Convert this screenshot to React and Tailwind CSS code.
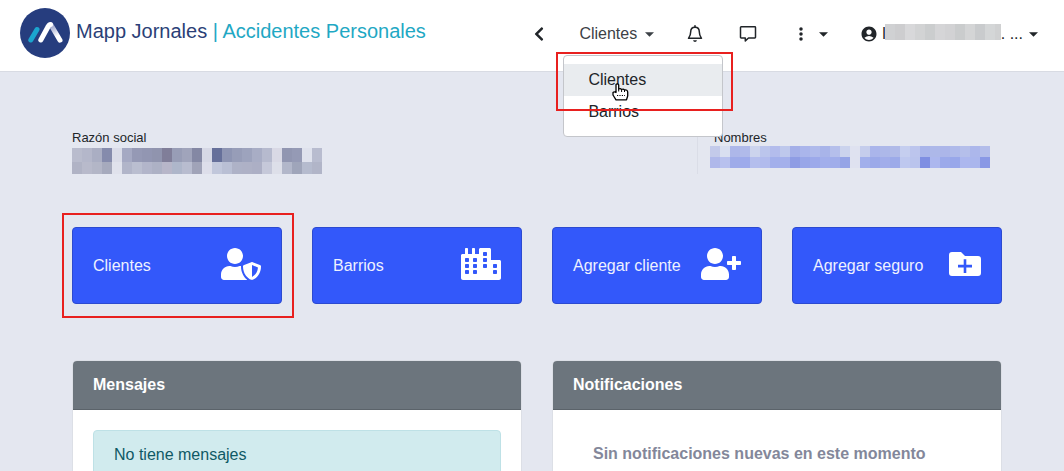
import React from 'react';
import { FaChevronLeft, FaCity, FaUserPlus, FaUserShield } from 'react-icons/fa';
import { FaEllipsisVertical } from 'react-icons/fa6';
import { MdAccountCircle } from 'react-icons/md';

const businessMask = {
  rows: [
    { y: 0, height: 14, colors: ['#b9bccd', '#b4b7ca', '#aaaec3', '#858bac', '#dadce8', '#a5a9c3', '#9599b5', '#9296b2', '#9094ae', '#807e99', '#989db6', '#a0a4bb', '#8488a4', '#d6d8e5', '#66709a', '#8e95b3', '#979db8', '#9da3bd', '#a8adc5', '#b6bace', '#d9d9e5', '#9196b1', '#959ab5', '#dfe2ed', '#b8bccf'] },
    { y: 14, height: 12, colors: ['#b0b3c5', '#b8bacb', '#b3b6c7', '#a6aabd', '#e0e2ec', '#b1b5c9', '#babed0', '#b2b5ca', '#adb1c5', '#b7b6c9', '#aeb6ca', '#b8bccf', '#a0a3b8', '#dddeea', '#c1c7db', '#b9bfd4', '#aeb2c7', '#aeb1c6', '#acafc5', '#c5c8d9', '#dddfe9', '#b2b7ca', '#9fa5ba', '#b5bbce', '#b1b5c8'] },
  ],
  width: 250,
  height: 26,
};

const nameMask = {
  rows: [
    { y: 0, height: 11, colors: ['#c3caea', '#d9dff0', '#adb7e9', '#b0baea', '#ccd4ed', '#bbc5ec', '#b3bcec', '#bec8ec', '#a4afe8', '#aab5eb', '#afbaeb', '#a8b4e9', '#b5bfeb', '#cbd3ed', '#dfe2f0', '#c5cdec', '#aab5eb', '#adb8e9', '#b0bae8', '#c5ceef', '#bcc5ed', '#a9b5ea', '#adb8e9', '#acb6e9', '#afbaea', '#b5bfea', '#acb7eb', '#b3bdea'] },
    { y: 11, height: 11, colors: ['#afb8ea', '#b8c1ee', '#9eabe9', '#9daaeb', '#b4beed', '#b1bbed', '#a2afeb', '#a4b0eb', '#8e9ce4', '#98a6e8', '#9ca9ea', '#a1aeeb', '#a0adea', '#95a4e6', '#dfe2f0', '#a1afeb', '#9ba9e9', '#a1adea', '#9caae9', '#bec8ef', '#bac4ed', '#7e8ee2', '#acb7ee', '#9ba9ea', '#98a7ea', '#acb7ee', '#aab6ed', '#8998e5'] },
  ],
  width: 280,
  height: 22,
};

const userMask = {
  rows: [
    { y: 0, height: 16, colors: ['#d0d1d3', '#cdcdcf', '#d8d8da', '#d2d3d4', '#cbcdce', '#d5d5d7', '#d2d2d4', '#cacccd', '#d4d5d6', '#c9cbcd', '#d4d6d7', '#d0d1d2'] },
  ],
  width: 116,
  height: 16,
};

const Mask = ({ mask, className }) => (
  <svg
    viewBox={`0 0 ${mask.width} ${mask.height}`}
    width={mask.width}
    height={mask.height}
    className={className}
    shapeRendering="crispEdges"
    aria-hidden="true"
  >
    {mask.rows.map((row) =>
      row.colors.map((color, i) => (
        <rect key={`${row.y}-${i}`} x={i * 10} y={row.y} width="10" height={row.height} fill={color} />
      ))
    )}
  </svg>
);

const Logo = () => (
  <svg viewBox="0 0 50 50" className="w-[50px] h-[50px] shrink-0" aria-hidden="true">
    <defs>
      <linearGradient id="leg" gradientUnits="userSpaceOnUse" x1="31" y1="17" x2="40" y2="33">
        <stop offset="0.1" stopColor="#a3abcf" />
        <stop offset="0.7" stopColor="#ffffff" />
      </linearGradient>
    </defs>
    <circle cx="25" cy="25" r="25" fill="#263d7e" />
    <path d="M17 21.500 L10.800 32" stroke="#1ba5cf" strokeWidth="5" strokeLinecap="round" />
    <path d="M31 17 L40 32.200" stroke="url(#leg)" strokeWidth="5" strokeLinecap="round" />
    <path d="M20.800 32 L28 18.800 Q29 16.500 30.500 16.500" fill="none" stroke="#ffffff" strokeWidth="5" strokeLinecap="round" />
  </svg>
);

const Caret = () => (
  <svg viewBox="0 0 10 5" className="w-[9px] h-[5px]" aria-hidden="true">
    <path d="M0 0 H10 L5 5 Z" fill="currentColor" />
  </svg>
);

const BellIcon = () => (
  <svg viewBox="0 0 16 18" className="w-4 h-[18px]" fill="none" stroke="currentColor" aria-hidden="true">
    <path
      d="M8 2.200 C5 2.200 3.700 4.400 3.700 6.800 C3.700 10.200 2.800 11.300 1.500 13.300 H14.500 C13.200 11.300 12.300 10.200 12.300 6.800 C12.300 4.400 11 2.200 8 2.200 Z"
      strokeWidth="1.500"
      strokeLinejoin="round"
    />
    <path d="M8 0.800 V2" strokeWidth="1.600" strokeLinecap="round" />
    <path d="M6 15.300 H10 Q9.600 17 8 17 Q6.400 17 6 15.300 Z" fill="currentColor" stroke="none" />
  </svg>
);

const MessageIcon = () => (
  <svg viewBox="0 0 18 18" className="w-[18px] h-[18px]" fill="none" stroke="currentColor" aria-hidden="true">
    <path
      d="M2.200 1.800 H15.800 Q16.500 1.800 16.500 2.500 V12.300 Q16.500 13 15.800 13 H9.500 L6.300 15.900 V13 H2.200 Q1.500 13 1.500 12.300 V2.500 Q1.500 1.800 2.200 1.800 Z"
      strokeWidth="1.500"
      strokeLinejoin="round"
    />
  </svg>
);

const FolderPlusIcon = () => (
  <svg viewBox="0 0 32 24" className="w-8 h-6" aria-hidden="true">
    <path d="M3 0 H12 L16 4 H29 Q32 4 32 7 V21 Q32 24 29 24 H3 Q0 24 0 21 V3 Q0 0 3 0 Z" fill="currentColor" />
    <path d="M16 7.200 V21 M9 14.100 H23" stroke="#3358fa" strokeWidth="2.600" />
  </svg>
);

const HandCursor = () => (
  <svg viewBox="0 0 17 18" className="absolute left-[48px] top-[27px] w-[17px] h-[18px] pointer-events-none" aria-hidden="true">
    <path
      d="M4 1.500 Q5.500 0.200 6.700 1.800 V6 Q8.500 5 9.500 6.500 Q11.500 5.500 12.500 7 Q15.500 6.500 15.700 9 V13 L14.500 16.800 H4 L1 12 V9.500 Q2.200 8.300 4 9.500 Z"
      fill="#ffffff"
      stroke="#000000"
      strokeWidth="1.300"
      strokeLinejoin="round"
    />
    <path d="M6.700 6 V8.500 M9.600 6.500 V9 M12.500 7 V9" stroke="#000000" strokeWidth="1" />
    <path d="M5 12.500 H13" stroke="#000000" strokeWidth="1.200" strokeDasharray="1.200 1.200" />
  </svg>
);

const shortcuts = [
  { label: 'Clientes', icon: <FaUserShield className="w-10 h-8" />, highlighted: true },
  { label: 'Barrios', icon: <FaCity className="w-10 h-8" /> },
  { label: 'Agregar cliente', icon: <FaUserPlus className="w-10 h-8" /> },
  { label: 'Agregar seguro', icon: <FolderPlusIcon /> },
];

const Header = () => (
  <header className="flex items-start justify-between bg-white border-b border-[#d8dbe3] h-[72px] pl-5 pr-[26px]">
    <a href="#inicio" className="flex items-center gap-[6px] pt-2 text-xl text-[#2b3f77]">
      <Logo />
      <span className="pb-1 whitespace-nowrap">
        Mapp Jornales <span className="text-[#1fa8c4]">| Accidentes Personales</span>
      </span>
    </a>

    <nav className="flex items-center h-6 mt-[22px] text-[#212529]">
      <button aria-label="Volver" className="mr-8">
        <FaChevronLeft className="w-4 h-4" />
      </button>
      <div className="relative mr-[33px]">
        <button className="flex items-center gap-2 text-[#3c4146]" aria-expanded="true">
          Clientes <Caret />
        </button>
        <div className="absolute z-10 -left-4 top-[33px] w-40 py-2 bg-white border border-[#c4c6cb] rounded">
          <a href="#clientes" className="block px-6 py-1 bg-[#e9ecef]">Clientes</a>
          <a href="#barrios" className="block px-6 py-1">Barrios</a>
          <HandCursor />
        </div>
        <div className="absolute z-20 -left-[23px] top-[30px] w-[177px] h-[59px] border-2 border-[#e8201f] pointer-events-none" />
      </div>
      <button aria-label="Notificaciones" className="mr-9">
        <BellIcon />
      </button>
      <button aria-label="Mensajes" className="mr-9">
        <MessageIcon />
      </button>
      <button aria-label="Más opciones" className="flex items-center gap-[10px] mr-8">
        <FaEllipsisVertical className="w-4 h-4" />
        <Caret />
      </button>
      <button aria-label="Cuenta" className="flex items-center">
        <MdAccountCircle className="w-[18px] h-[18px] mr-1" />
        <span className="flex items-center">
          <span>l</span>
          <Mask mask={userMask} className="-ml-px mb-1" />
          <span>. ...</span>
        </span>
        <span className="ml-[6px]"><Caret /></span>
      </button>
    </nav>
  </header>
);

const Panel = ({ title, children }) => (
  <section className="bg-white border border-[#dcdfe6] rounded-[5px] overflow-hidden min-h-[180px]">
    <h2 className="px-5 py-3 font-bold text-white bg-[#6c757d] border-b border-[#5b636a]">{title}</h2>
    <div className="p-5">{children}</div>
  </section>
);

const App = () => {
  return (
    <div className="h-screen overflow-hidden bg-[#e4e7f0] font-['Liberation_Sans',Arial,sans-serif] text-base text-[#212529]">
      <Header />

      <main className="pl-[72px] pr-[62px]">
        <div className="flex justify-between pt-14 text-[13px] leading-5">
          <div>
            <p>Razón social</p>
            <Mask mask={businessMask} />
          </div>
          <div className="mr-3 border-l border-[#dadde7] pl-3">
            <p className="pl-1">Nombres</p>
            <Mask mask={nameMask} className="-mt-[2px]" />
          </div>
        </div>

        <div className="grid grid-cols-4 gap-[30px] mt-[53px]">
          {shortcuts.map((item) => (
            <div key={item.label} className="relative">
              <button className="flex items-center justify-between w-full h-[77px] px-5 text-[#eef1ff] bg-[#3358fa] border border-[#2c4ad0] rounded">
                <span>{item.label}</span>
                <span className="pb-1 text-white">{item.icon}</span>
              </button>
              {item.highlighted && (
                <div className="absolute -left-[10px] -right-3 -top-[14px] -bottom-[14px] border-2 border-[#e8201f] pointer-events-none" />
              )}
            </div>
          ))}
        </div>

        <div className="grid grid-cols-2 gap-[30px] mt-14">
          <Panel title="Mensajes">
            <p className="px-5 py-3 text-[#0f5965] bg-[#d1ebee] border border-[#bee1e6] rounded">No tiene mensajes</p>
          </Panel>
          <Panel title="Notificaciones">
            <p className="px-5 py-3 font-bold text-[#83879a]">Sin notificaciones nuevas en este momento</p>
          </Panel>
        </div>
      </main>
    </div>
  );
};

export default App;
